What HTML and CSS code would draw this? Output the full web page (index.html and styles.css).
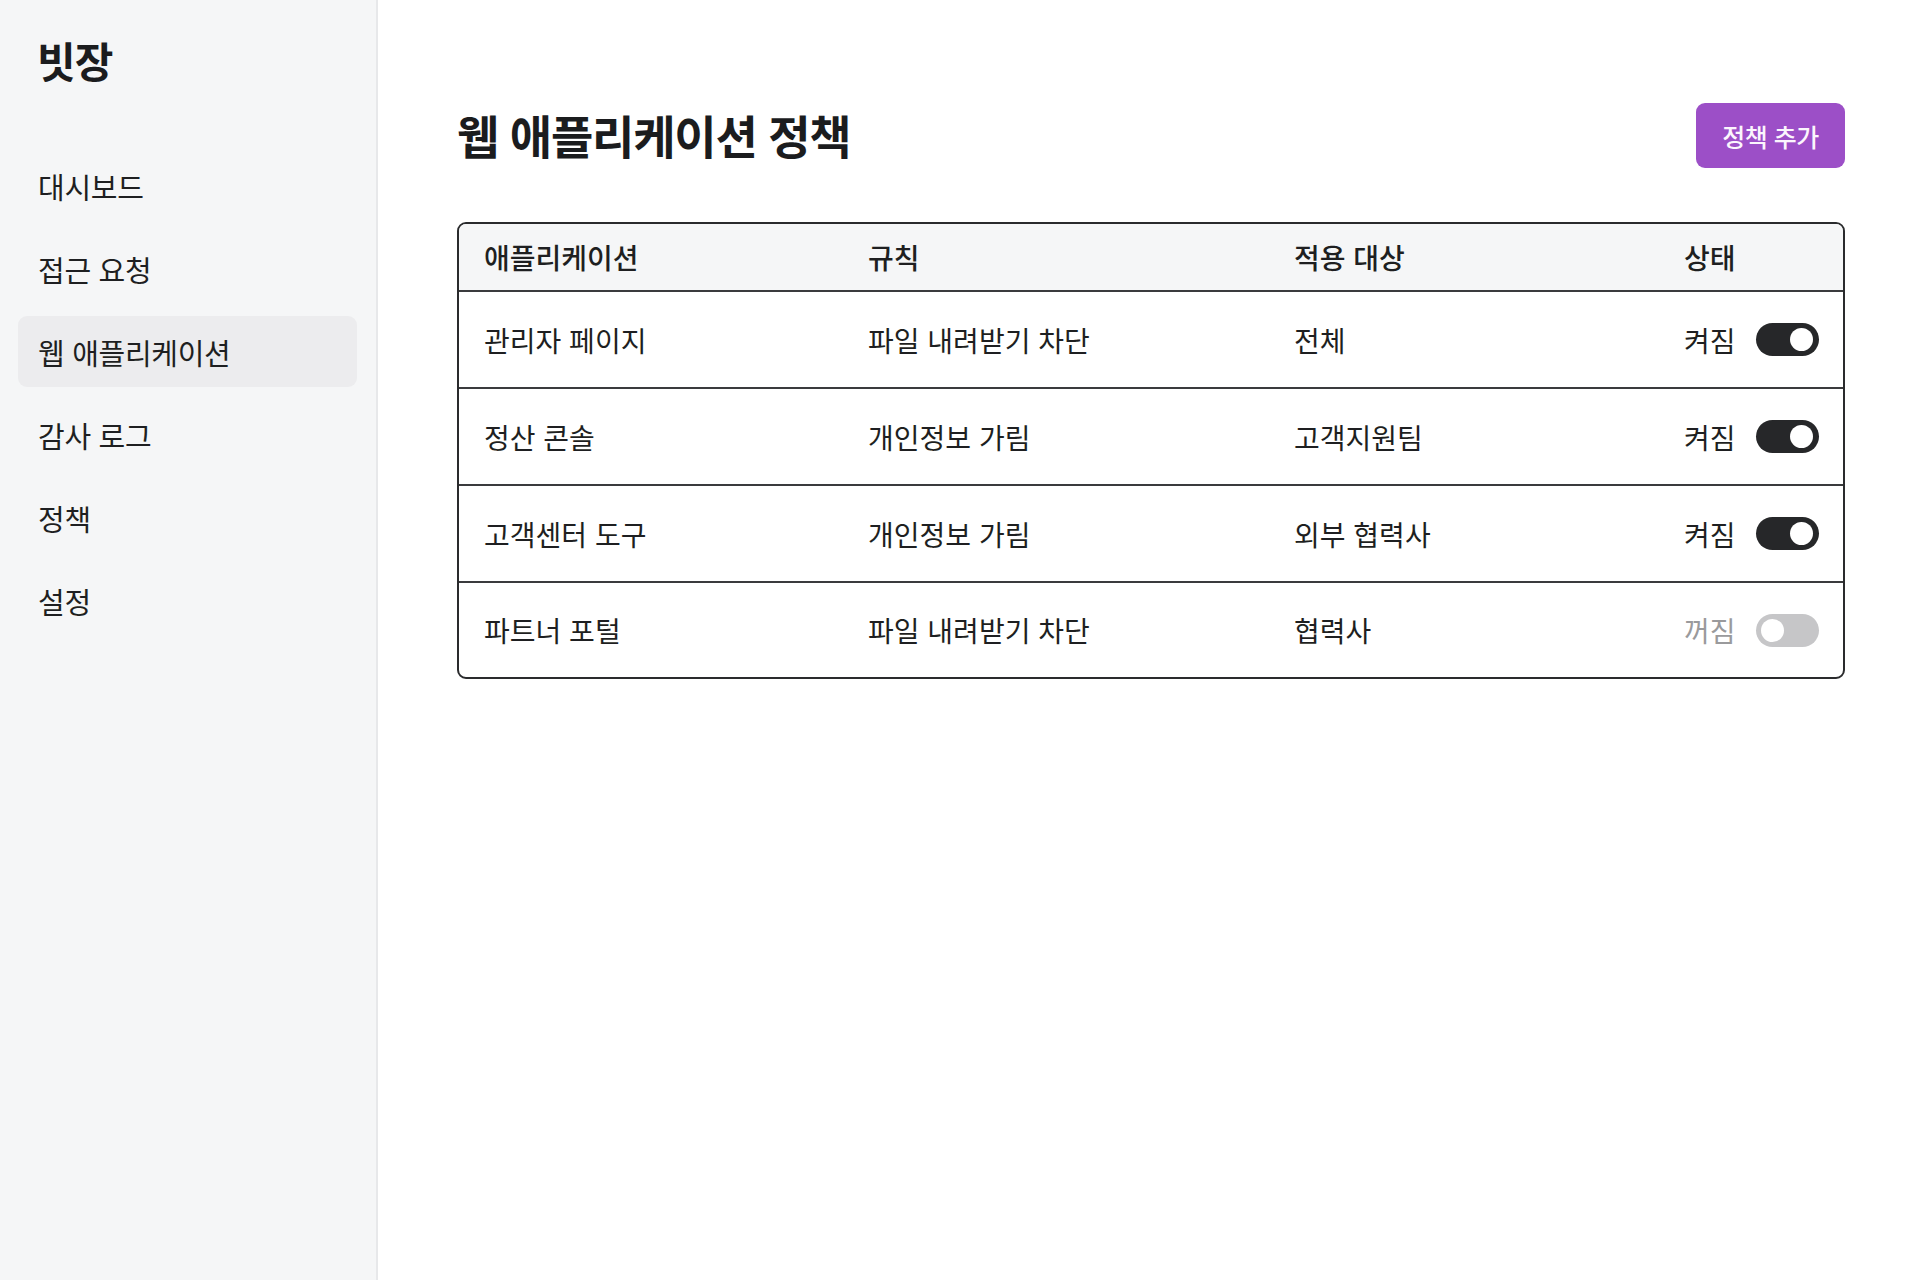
FILE: index.html
```html
<!DOCTYPE html>
<html lang="ko">
<head>
<meta charset="utf-8">
<title>빗장 - 웹 애플리케이션 정책</title>
<link rel="stylesheet" href="styles.css">
</head>
<body>
<div class="app">
  <aside class="sidebar">
    <div class="logo">빗장</div>
    <nav class="nav">
      <a class="nav-item">대시보드</a>
      <a class="nav-item">접근 요청</a>
      <a class="nav-item active">웹 애플리케이션</a>
      <a class="nav-item">감사 로그</a>
      <a class="nav-item">정책</a>
      <a class="nav-item">설정</a>
    </nav>
  </aside>
  <main class="main">
    <header class="page-header">
      <h1 class="title">웹 애플리케이션 정책</h1>
      <button class="btn-primary">정책 추가</button>
    </header>
    <div class="table">
      <div class="row head">
        <div class="cell">애플리케이션</div>
        <div class="cell">규칙</div>
        <div class="cell">적용 대상</div>
        <div class="cell">상태</div>
      </div>
      <div class="row">
        <div class="cell">관리자 페이지</div>
        <div class="cell">파일 내려받기 차단</div>
        <div class="cell">전체</div>
        <div class="cell status"><span class="state">켜짐</span><span class="toggle on"><span class="knob"></span></span></div>
      </div>
      <div class="row">
        <div class="cell">정산 콘솔</div>
        <div class="cell">개인정보 가림</div>
        <div class="cell">고객지원팀</div>
        <div class="cell status"><span class="state">켜짐</span><span class="toggle on"><span class="knob"></span></span></div>
      </div>
      <div class="row">
        <div class="cell">고객센터 도구</div>
        <div class="cell">개인정보 가림</div>
        <div class="cell">외부 협력사</div>
        <div class="cell status"><span class="state">켜짐</span><span class="toggle on"><span class="knob"></span></span></div>
      </div>
      <div class="row last">
        <div class="cell">파트너 포털</div>
        <div class="cell">파일 내려받기 차단</div>
        <div class="cell">협력사</div>
        <div class="cell status"><span class="state off">꺼짐</span><span class="toggle"><span class="knob"></span></span></div>
      </div>
    </div>
  </main>
</div>
</body>
</html>
```

FILE: styles.css
```css
* { box-sizing: border-box; }

html, body {
  margin: 0;
  padding: 0;
  background: #ffffff;
  color: #1e1f21;
  font-family: "Noto Sans CJK KR", "Noto Sans", sans-serif;
}

.app {
  display: flex;
  min-height: 1280px;
}

.sidebar {
  width: 378px;
  flex: 0 0 378px;
  background: #f5f6f7;
  border-right: 2px solid #e7e8ea;
  padding: 30px 19px 0 18px;
}

.logo {
  font-size: 42px;
  font-weight: 700;
  line-height: 60px;
  padding-left: 19px;
  letter-spacing: -1px;
  color: #1b1c1e;
}

.nav {
  display: flex;
  flex-direction: column;
  gap: 12px;
  margin-top: 60px;
}

.nav-item {
  display: flex;
  align-items: center;
  height: 71px;
  padding-left: 20px;
  border-radius: 9px;
  font-size: 29px;
  color: #1e1f21;
  letter-spacing: -0.3px;
}

.nav-item.active {
  background: #ececee;
}

.main {
  flex: 1;
  padding: 103px 75px 0 79px;
}

.page-header {
  display: flex;
  align-items: center;
  justify-content: space-between;
  height: 65px;
}

.title {
  margin: 0 0 4px;
  font-size: 46px;
  font-weight: 700;
  letter-spacing: -1.2px;
  color: #1b1c1e;
}

.btn-primary {
  width: 149px;
  height: 65px;
  border: none;
  border-radius: 9px;
  background: #9c4fc7;
  color: #fbf6fd;
  font-family: inherit;
  font-size: 25px;
  font-weight: 500;
  letter-spacing: -0.5px;
}

.table {
  margin-top: 54px;
  border: 2px solid #2a2b2d;
  border-radius: 9px;
  overflow: hidden;
}

.row {
  display: grid;
  grid-template-columns: 384px 426px 390px 1fr;
  align-items: center;
  height: 97px;
  border-bottom: 2px solid #3a3b3d;
  font-size: 28px;
  letter-spacing: 0;
}

.row.head {
  height: 68px;
  background: #f5f6f7;
  font-weight: 500;
}

.row.last {
  border-bottom: none;
  height: 94px;
}

.cell {
  padding-left: 25px;
  white-space: nowrap;
}

.status {
  display: flex;
  align-items: center;
  gap: 20px;
}

.state.off {
  color: #9a9a9c;
}

.toggle {
  position: relative;
  display: inline-block;
  width: 63px;
  height: 33px;
  border-radius: 17px;
  background: #c6c6c8;
}

.toggle .knob {
  position: absolute;
  top: 5px;
  left: 5px;
  width: 23px;
  height: 23px;
  border-radius: 50%;
  background: #ffffff;
}

.toggle.on {
  background: #262729;
}

.toggle.on .knob {
  left: auto;
  right: 6px;
}
```
